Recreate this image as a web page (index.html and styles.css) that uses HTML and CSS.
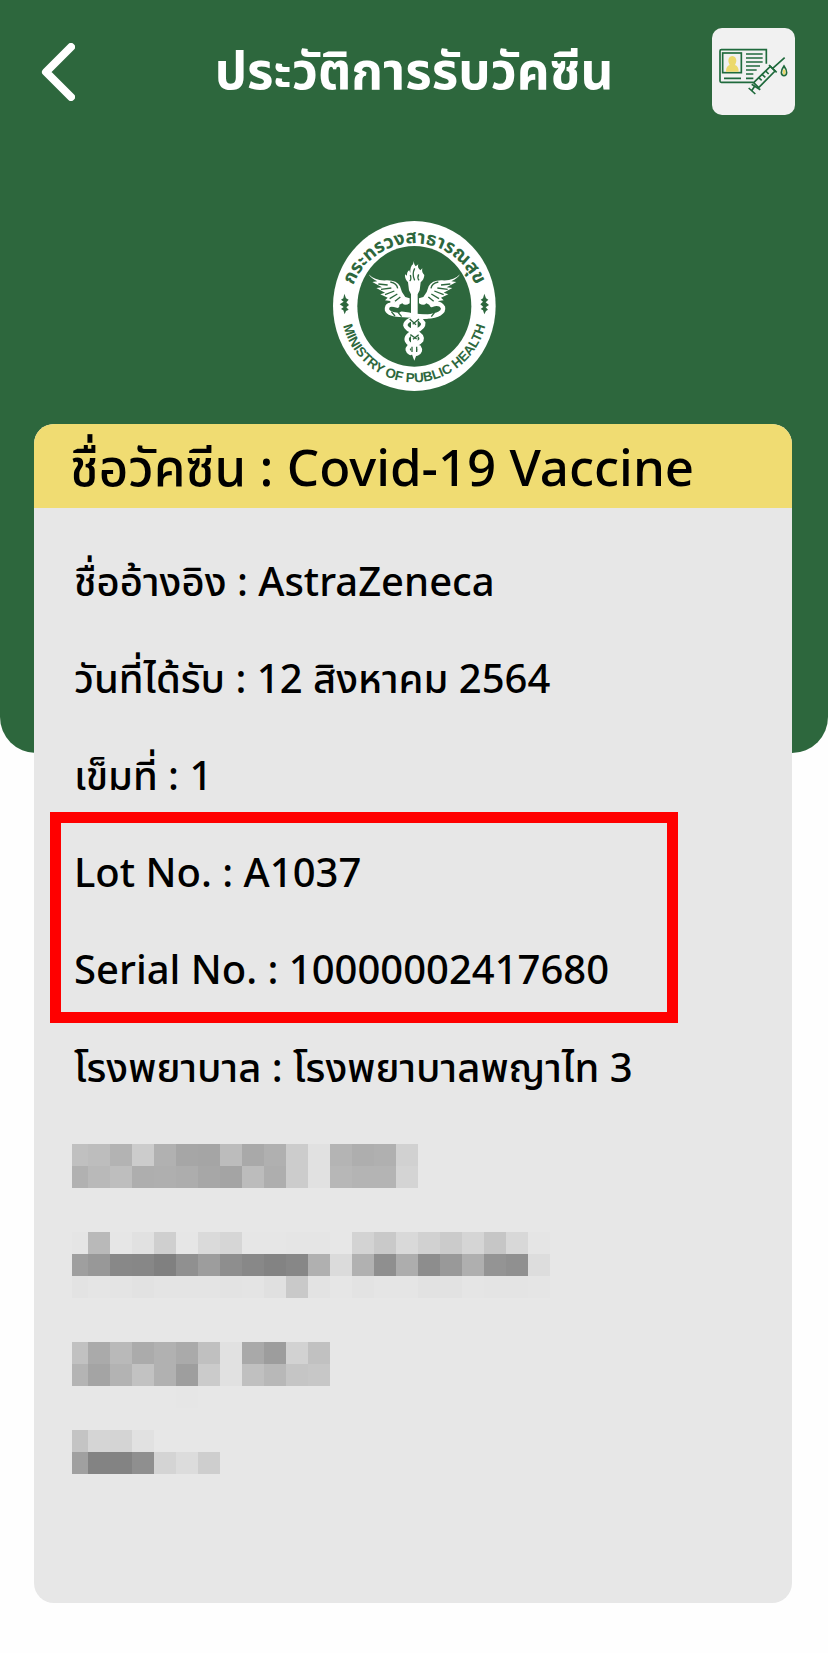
FILE: index.html
```html
<!DOCTYPE html>
<html lang="th">
<head>
	<meta charset="utf-8">
	<meta name="viewport" content="width=device-width, initial-scale=1">
	<title>ประวัติการรับวัคซีน</title>
	<link rel="stylesheet" href="styles.css">
</head>
<body>

<div class="hero">
    <header class="top-bar">
        <button type="button" class="back-btn" aria-label="ย้อนกลับ">
            <svg viewBox="0 0 34 58" width="34" height="58">
                <path d="M30 4 L5 29 L30 54" />
            </svg>
        </button>
        <h1>ประวัติการรับวัคซีน</h1>
        <button type="button" class="cert-btn" aria-label="ใบรับรองวัคซีน">
            <svg viewBox="36 25 249 261" width="83" height="87">
                <g class="line">
                    <path d="M160 188 H64 Q60 188 60 184 V94 Q60 90 64 90 H199 V132" />
                    <rect x="68" y="100" width="56" height="59" />
                    <path d="M138 103 H188 M138 115 H188 M138 127 H188 M138 139 H180 M138 151 H170 M138 163 H160 M72 176 H123 M138 176 H160" />
                </g>
                <path class="person" d="M78 156 Q78 139 89 136 Q86 130 85 124 Q85 110 97 109 Q109 110 109 124 Q108 130 105 136 Q116 139 116 156 Z" />
                <g class="line">
                    <path class="barrel" d="M161 189 L211 140 L225 154 L176 204 Z" />
                    <path d="M218 146 L254 114 M207 136 L230 158 M155 194 L181 210 M164 200 L156 212 M146 205 L166 223 M176 174 L185 182 M186 164 L196 173 M197 154 L206 163" />
                    <path d="M252 139 Q244 150 244 159 Q245 168 252 168 Q259 168 260 159 Q260 150 252 139 Z" />
                </g>
                <rect class="person" x="249" y="150" width="7" height="14" />
            </svg>
        </button>
    </header>

    <!-- ministry emblem -->
    <svg class="emblem" viewBox="30 28 489 510" width="163" height="170" role="img" aria-label="กระทรวงสาธารณสุข">
        <defs>
            <path id="arc-top" d="M77 330 A199 206 0 1 1 471 330" />
            <path id="arc-bottom" d="M53 283 A221 229 0 0 0 495 283" />
        </defs>
        <ellipse class="ring" cx="274" cy="283" rx="244" ry="255" />
        <ellipse class="disc" cx="274" cy="284" rx="171" ry="181" />
        <text class="ring-th" text-anchor="middle"><textPath href="#arc-top" startOffset="50%">กระทรวงสาธารณสุข</textPath></text>
        <text class="ring-en" text-anchor="middle"><textPath href="#arc-bottom" startOffset="50%">MINISTRY OF PUBLIC HEALTH</textPath></text>
        <path class="mark" d="M64 246 L69 260 L77 264 L70 272 L78 280 L70 287 L77 294 L69 298 L65 308 L61 296 L54 292 L62 286 L50 278 L62 270 L54 264 L61 260 Z" />
        <path class="mark" d="M484 246 L489 260 L496 264 L488 272 L498 280 L488 287 L495 294 L489 298 L484 308 L480 296 L473 292 L481 286 L472 278 L480 270 L473 264 L480 260 Z" />

        <!-- torch and staff -->
        <path class="fill" d="M274 144 Q270 154 278 164 L286 158 Q282 168 292 176 L298 170 Q295 182 304 190 Q303 204 293 212 L290 236 L284 248 V420 L274 447 L264 420 V248 L258 236 L255 212 Q245 202 246 188 L252 192 Q251 180 259 176 L262 184 Q261 164 270 158 Z" />
        <path class="cut" d="M262 190 Q266 204 260 208 M275 170 Q266 188 275 206 M287 188 Q282 198 288 206" />
        <!-- wings -->
        <g id="wing">
            <path class="fill" d="M137 188 Q156 208 190 206 Q222 205 231 224 Q234 240 247 256 L260 260 V275 Q246 284 238 275 L222 283 L216 273 L202 278 L202 268 L186 266 L194 258 L172 248 L186 243 L160 229 L177 227 L148 211 L163 209 Q144 200 137 188 Z" />
            <path class="cut" d="M166 217 L194 220 M174 233 L205 229 M186 249 L214 238 M200 261 L223 247 M216 269 L232 256 M202 211 Q222 215 224 230" />
        </g>
        <use href="#wing" transform="translate(548 0) scale(-1 1)" />
        <!-- snakes -->
        <g class="snake">
            <path d="M223 282 Q190 272 192 295 Q198 310 241 310 L310 315 Q365 310 360 287 Q350 270 326 280" />
            <path d="M236 306 Q282 308 301 334 Q302 348 280 357 Q245 371 252 388 Q258 402 288 407 Q296 418 282 426" />
            <path d="M310 315 Q248 320 247 341 Q250 354 275 360 Q301 371 295 386 Q284 399 258 405 Q248 415 262 424" />
        </g>
        <path class="cut" d="M205 300 L216 313 M225 302 L236 315 M325 315 L335 302 M260 322 L279 339 M288 322 L269 338 M262 369 L281 382 M287 369 L270 383 M267 405 V421 M281 405 V421" />
    </svg>
</div>

<main class="card">
    <h2>ชื่อวัคซีน : Covid-19 Vaccine</h2>
    <div class="details">
        <p>ชื่ออ้างอิง : AstraZeneca</p>
        <p>วันที่ได้รับ : 12 สิงหาคม 2564</p>
        <p>เข็มที่ : 1</p>
        <div class="highlight">
            <p>Lot No. : A1037</p>
            <p>Serial No. : 10000002417680</p>
        </div>
        <p>โรงพยาบาล : โรงพยาบาลพญาไท 3</p>
        <!-- hidden personal data, filled by the script below -->
        <div class="mosaic" id="mosaic"></div>
    </div>
</main>

<script>
// grey level of each block, one string per row, empty = nothing drawn
const rows = [
    "c0 bd b3 cc b1 a6 a5 bc a9 b0 cc e1 b4 ae b0 d1",
    "b1 b9 be ae af ad a7 a4 bc ae cc e1 b7 b4 b4 d4",
    "",
    "",
    "e5 b9 e6 e1 cf e6 da d6 e6 e6 e5 e5 e7 d3 c9 d9 d1 cb d5 c6 d8 e5",
    "9f 98 88 87 80 90 9d 8e 88 83 87 b0 db b1 8f ad 8d 99 af 94 90 dd",
    "e3 e5 e4 e2 e4 e4 e4 e3 e4 e0 c9 e3 e6 e3 e5 e5 e2 e2 e5 e4 e4 e5",
    "",
    "",
    "c1 aa b9 ab b1 aa c0 e1 a9 9d d2 c1",
    "b4 a4 b3 c2 b1 9e cb e1 c0 b8 c5 c7",
    "e7 e7 e7 e7 e7 e6",
    "",
    "c4 d5 d4 e1",
    "a0 83 83 8f d4 dc ce"
];
const mosaic = document.getElementById("mosaic");

rows.forEach(row => {
    const line = document.createElement("div");
    line.className = "mosaic-row";
    row.split(" ").filter(Boolean).forEach(grey => {
        const block = document.createElement("span");
        block.style.backgroundColor = "#" + grey + grey + grey;
        line.appendChild(block);
    });
    mosaic.appendChild(line);
});
</script>

</body>
</html>
```
FILE: styles.css
```css
body {
    font-family: "Noto Sans", "Noto Sans Thai", "Open Sans", sans-serif;
    background-color: #fefefe;
    color: #000;
    margin: 0;
    padding-bottom: 50px;
}

h1, h2, p {
    margin: 0;
}

.hero {
    background-color: #2d673d;
    border-radius: 0 0 36px 36px;
    padding: 28px 33px 362px;
}

.top-bar {
    display: grid;
    grid-template-columns: 1fr auto 1fr;
    align-items: center;
}

.top-bar button {
    display: flex;
    padding: 0;
    border: none;
    background: none;
    cursor: pointer;
}

.top-bar h1 {
    color: #fff;
    font-size: 51px;
    line-height: 72px;
    font-weight: bold;
    padding-bottom: 6px;
}

.top-bar .back-btn {
    justify-self: start;
    padding-left: 8px;
}

.back-btn path {
    fill: none;
    stroke: #fff;
    stroke-width: 8;
    stroke-linecap: round;
    stroke-linejoin: round;
}

.top-bar .cert-btn {
    justify-self: end;
    background-color: #f1f1f1;
    border-radius: 10px;
}

.cert-btn .line {
    fill: none;
    stroke: #1f6a3c;
    stroke-width: 5;
}

.cert-btn .barrel {
    fill: #f1f1f1;
}

.cert-btn .person {
    fill: #ecd96b;
}

.emblem {
    display: block;
    margin: 106px auto 0;
}

.emblem .ring, .emblem .fill {
    fill: #fff;
}

.emblem .disc, .emblem .mark, .emblem text {
    fill: #2d673d;
}

.ring-th {
    font-size: 56px;
    font-weight: bold;
}

.ring-en {
    font-family: "Liberation Sans", Arial, sans-serif;
    font-size: 40px;
    font-weight: bold;
}

.emblem .cut {
    fill: none;
    stroke: #2d673d;
    stroke-width: 4;
}

.emblem .snake {
    fill: none;
    stroke: #fff;
    stroke-width: 13;
    stroke-linecap: round;
}

.card {
    margin: -329px 36px 0 34px;
    background-color: #e7e7e7;
    border-radius: 20px;
    overflow: hidden;
}

.card h2 {
    background-color: #f0dc72;
    padding: 0 36px;
    font-size: 51px;
    line-height: 84px;
    font-weight: 500;
}

.details {
    display: flex;
    flex-direction: column;
    gap: 33px;
    padding: 41px 16px 129px;
}

.details p {
    padding: 0 24px;
    font-size: 40px;
    line-height: 64px;
    font-weight: 500;
}

/* red frame around the lot and serial numbers */
.highlight {
    display: flex;
    flex-direction: column;
    gap: 33px;
    box-sizing: border-box;
    max-width: 628px;
    margin: -28px 0 -21px;
    padding: 17px 0 11px;
    border: 11px solid #ff0000;
}

.highlight p {
    padding: 0 13px;
}

.mosaic {
    margin: 12px 22px 0;
}

.mosaic-row {
    display: flex;
    height: 22px;
}

.mosaic-row span {
    width: 22px;
}

.mosaic-row span:first-child {
    width: 16px;
}
```
